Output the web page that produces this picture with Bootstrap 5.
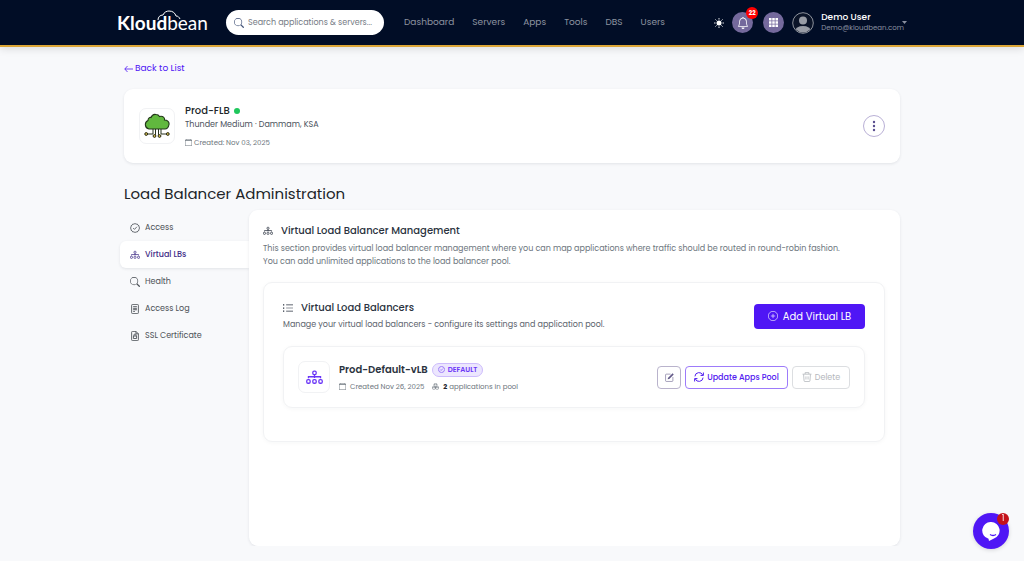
<!DOCTYPE html>
<html lang="en">
<head>
<meta charset="utf-8">
<meta name="viewport" content="width=device-width, initial-scale=1">
<title>Load Balancer Administration</title>
<link href="https://cdn.jsdelivr.net/npm/bootstrap@5.3.0/dist/css/bootstrap.min.css" rel="stylesheet">
<style>
:root { --brand: #4f16f5; --navy: #010d26; --ink: #2b3340; --soft: #6c757d; --line: #f1f2f4; }
body { font-family: Poppins, Inter, "Liberation Sans", sans-serif; font-size: 9px; line-height: 13px; background: #f8f9fb; color: var(--soft); }
a { text-decoration: none; }
svg { flex: none; fill: currentColor; }
.topbar { background: var(--navy); border-bottom: 2px solid #dca637; box-shadow: 0 2px 8px rgba(0,0,0,.12); min-height: 47px; }
.topbar .container { max-width: 814px; }
.shell { max-width: 800px; }
.brand { font-family: Lato, "Noto Sans", sans-serif; font-size: 19px; line-height: 24px; color: #fff; position: relative; width: 109px; flex: none; }
.brand b { font-weight: 700; }
.brand .cloud { position: absolute; left: 40px; top: -1px; fill: none; }
.search { width: 158px; flex: none; height: 25px; border-radius: 13px; background: #fff; color: #44557a; padding: 0 8px; }
.search input { border: 0; outline: 0; background: none; width: 100%; min-width: 0; padding: 0; font-size: 8px; color: #333; }
.search input::placeholder { color: #757b85; opacity: 1; }
.menu { gap: 18px; margin-left: 20px; }
.menu a { color: #8c93a0; }
.round { width: 21px; height: 21px; border-radius: 50%; border: 0; padding: 0; background: #74699c; color: #fff; position: relative; }
.bell { margin-right: 2px; }
.count { position: absolute; top: -5px; right: -5px; min-width: 12px; height: 12px; border-radius: 6px; background: #f00; color: #fff; font-size: 6px; font-weight: 700; line-height: 12px; text-align: center; }
.plain { background: none; border: 0; padding: 0; color: #fff; }
.user { background: none; border: 0; padding: 0; color: #8a90a0; gap: 7px; text-align: left; }
.user small, .meta { font-size: 7px; line-height: 11px; }
.user strong { color: #fff; font-weight: 500; line-height: 10px; }
.caret { margin-left: -9px; }
.back { color: var(--brand); margin: 15px 0 14px; gap: 2px; }
.panel { background: #fff; border-radius: 9px; box-shadow: 0 1px 3px rgba(30,40,60,.1); }
.server { padding: 11px 15px; min-height: 74px; gap: 10px; }
.tile { border: 1px solid var(--line); border-radius: 7px; flex: none; }
.tile-lg { width: 36px; height: 36px; }
.tile-md { width: 32px; height: 32px; color: #6a35f7; }
.name { font-size: 10px; color: #212529; font-weight: 500; }
.dot { width: 6px; height: 6px; border-radius: 50%; background: #1fc75c; }
.spec { font-size: 8px; line-height: 12px; color: #5c636d; }
.server .spec { margin-top: 2px; color: #4b525c; }
.created { margin-top: 6px; gap: 2px; }
.more { width: 22px; height: 22px; border-radius: 50%; border: 1px solid #b9b0d6; background: #fff; color: #594c8f; padding: 0; }
.page-title { font-size: 15px; line-height: 20px; color: #212529; font-weight: 400; margin: 21px 0 6px; }
.side { width: 129px; flex: none; margin-left: -4px; padding-top: 4px; }
.side a { min-height: 27px; padding: 0 10px; gap: 5px; color: #4c5157; border-radius: 6px 0 0 6px; font-size: 8px; }
.side a.active { background: #fff; color: #3f2c86; font-weight: 500; box-shadow: 0 1px 3px rgba(30,40,60,.1); }
.main { min-height: 336px; padding: 14px 15px 20px 14px; }
.main h2, .main h3, .main h4 { margin: 0; font-size: 10px; line-height: 14px; font-weight: 500; color: var(--ink); }
.main h4 { font-weight: 600; }
.intro { font-size: 8px; }
.box { border: 1px solid var(--line); border-radius: 9px; box-shadow: 0 1px 4px rgba(30,40,60,.04); }
.list-box { padding: 18px 19px 33px; margin-top: 14px; }
.lb { padding: 14px; margin-top: 15px; gap: 9px; }
.add { background: var(--brand); color: #fff; border: 0; border-radius: 4px; height: 25px; width: 111px; font-size: 10px; gap: 5px; padding: 0; }
.act { height: 23px; border-radius: 4px; background: #fff; font-size: 8px; gap: 3px; padding: 0; }
.edit { width: 24px; border: 1px solid #b9b3cc; color: #625a88; }
.pool { width: 103px; border: 1px solid #9d7bfa; color: #5320f0; font-weight: 500; }
.del { width: 58px; border: 1px solid #dcdee1; color: #b4b7bc; }
.tag { height: 14px; border-radius: 7px; border: 1px solid #cdbcfc; background: #ece6fe; color: #6a35f7; font-size: 7px; line-height: 12px; font-weight: 600; padding: 0 5px; gap: 3px; }
.chat { position: fixed; right: 15px; bottom: 12px; width: 36px; height: 36px; border-radius: 50%; border: 0; padding: 0; background: var(--brand); color: #fff; box-shadow: 0 1px 4px rgba(0,0,0,.15); }
.chat .count { background: #c4121a; right: 0; top: 0; font-size: 8px; font-weight: 400; }
</style>
</head>
<body>
<svg width="0" height="0" class="position-absolute" aria-hidden="true">
  <symbol id="i-tree" viewBox="0 0 16 16"><g fill="none" stroke="currentColor" stroke-width="1.200"><rect x="6.400" y="2" width="3.200" height="3.200" rx="1.200"/><rect x=".7" y="10" width="3.200" height="3.400" rx="1.200"/><rect x="6.400" y="10" width="3.200" height="3.400" rx="1.200"/><rect x="12.100" y="10" width="3.200" height="3.400" rx="1.200"/><path d="M8 5.200V8.500M2.300 8.800V7.300h11.400v1.500"/></g></symbol>
  <symbol id="i-search" viewBox="0 0 16 16"><path d="M11.742 10.344a6.500 6.500 0 1 0-1.397 1.398l3.850 3.850a1 1 0 0 0 1.415-1.414l-3.850-3.850zM12 6.500a5.500 5.500 0 1 1-11 0 5.500 5.500 0 0 1 11 0"/></symbol>
  <symbol id="i-cal" viewBox="0 0 16 16"><path d="M3.500 0a.5.5 0 0 1 .5.5V1h8V.5a.5.5 0 0 1 1 0V1h1a2 2 0 0 1 2 2v11a2 2 0 0 1-2 2H2a2 2 0 0 1-2-2V3a2 2 0 0 1 2-2h1V.5a.5.5 0 0 1 .5-.5M1 4v10a1 1 0 0 0 1 1h12a1 1 0 0 0 1-1V4z"/></symbol>
  <symbol id="i-check" viewBox="0 0 16 16"><g fill="none" stroke="currentColor" stroke-width="1.300"><path d="M8 .8l1.700 1 2-.1.900 1.700 1.800 1 0 2 1 1.600-1 1.700-.1 2-1.700 1-.9 1.700-2-.1L8 15.200l-1.700-1-2 .1-.9-1.700-1.700-1v-2L.7 8l1-1.600v-2l1.700-1 .9-1.700 2 .1z"/><path d="M5 8l2.200 2.200L11 6"/></g></symbol>
</svg>

<nav class="topbar d-flex align-items-center">
  <div class="container d-flex align-items-center">
    <a href="#" class="brand"><b>Kloud</b>bean
      <svg class="cloud" width="24" height="12" viewBox="0 0 24 12" stroke="#fff"><path d="M1 10c0-3 2-5 5-5 1-3 4-4 6-4 4 0 6 2 7 5 2 0 3 1 4 3"/></svg>
    </a>
    <label class="search d-flex align-items-center gap-1" for="q">
      <svg width="10" height="10"><use href="#i-search"/></svg>
      <input id="q" type="text" placeholder="Search applications &amp; servers..." aria-label="Search">
    </label>
    <div class="menu d-flex">
      <a href="#">Dashboard</a><a href="#">Servers</a><a href="#">Apps</a><a href="#">Tools</a><a href="#">DBS</a><a href="#">Users</a>
    </div>
    <div class="d-flex align-items-center gap-2 ms-auto">
      <button class="plain d-flex" aria-label="Theme"><svg width="10" height="10" viewBox="0 0 16 16"><circle cx="8" cy="8" r="4"/><path stroke="currentColor" stroke-width="1.400" d="M8 0v2.500M8 13.500V16M0 8h2.500M13.500 8H16M2.300 2.300l1.800 1.800M11.900 11.900l1.800 1.800M2.300 13.700l1.800-1.800M11.900 4.100l1.800-1.800"/></svg></button>
      <button class="round bell d-flex align-items-center justify-content-center" aria-label="Notifications"><svg width="12" height="12" viewBox="0 0 16 16"><path d="M8 16a2 2 0 0 0 2-2H6a2 2 0 0 0 2 2M8 1.918l-.797.161A4 4 0 0 0 4 6c0 .628-.134 2.197-.459 3.742-.16.767-.376 1.566-.663 2.258h10.244c-.287-.692-.502-1.490-.663-2.258C12.134 8.197 12 6.628 12 6a4 4 0 0 0-3.203-3.920zM14.220 12c.223.447.481.801.780 1H1c.299-.199.557-.553.780-1C2.680 10.200 3 6.880 3 6c0-2.420 1.720-4.440 4.005-4.901a1 1 0 1 1 1.990 0A5 5 0 0 1 13 6c0 .880.320 4.200 1.220 6"/></svg><span class="count">22</span></button>
      <button class="round d-flex align-items-center justify-content-center" aria-label="Modules"><svg width="9" height="9" viewBox="0 0 9 9"><path d="M0 0h2.500v2.500H0zM3.250 0h2.500v2.500h-2.500zM6.500 0H9v2.500H6.500zM0 3.250h2.500v2.500H0zM3.250 3.250h2.500v2.500h-2.500zM6.500 3.250H9v2.500H6.500zM0 6.500h2.500V9H0zM3.250 6.500h2.500V9h-2.500zM6.500 6.500H9V9H6.500z"/></svg></button>
      <button class="user d-flex align-items-center">
        <svg width="22" height="22" viewBox="0 0 22 22"><defs><clipPath id="av"><circle cx="11" cy="11" r="9.500"/></clipPath></defs><circle cx="11" cy="11" r="10.300" fill="#0b1428" stroke="#8d929c" stroke-width="1"/><g clip-path="url(#av)" fill="#989ca5"><circle cx="11" cy="8.500" r="4"/><ellipse cx="11" cy="19" rx="8" ry="5"/></g></svg>
        <span class="d-flex flex-column"><strong>Demo User</strong><small>Demo@kloudbean.com</small></span>
        <svg class="caret" width="5" height="3" viewBox="0 0 5 3"><path d="M0 0h5L2.500 3z"/></svg>
      </button>
    </div>
  </div>
</nav>

<div class="container shell">
  <a href="#" class="back d-inline-flex align-items-center"><svg width="9" height="8" viewBox="0 0 9 8"><path d="M3.500 1L.8 4l2.700 3M.8 4H9" fill="none" stroke="currentColor" stroke-width=".8"/></svg>Back to List</a>

  <section class="panel server d-flex align-items-center">
    <div class="tile tile-lg d-flex align-items-center justify-content-center">
      <svg width="26" height="26" viewBox="0 0 26 26"><g fill="none" stroke="#29331f" stroke-width="1"><path d="M9 15v6H3M11.500 15v7M14.500 15v7M17 15v6h6"/></g><path d="M5 16a4.500 4.500 0 0 1-1-8.500C4 5 6 4 7 4.500 8 2 10 1 12 1.500c2 0 3 1 3.500 2C19 2.500 21 5 20.500 7c3 0 5 2 4.500 4.500S23 16 21 16z" fill="#61b83e" stroke="#223519" stroke-width="1.100"/><g fill="#d4bf4c" stroke="#2c2c18"><circle cx="2.200" cy="21" r="1.400"/><circle cx="10.500" cy="23" r="1.400"/><circle cx="15.500" cy="23" r="1.400"/><circle cx="23.800" cy="21" r="1.400"/></g></svg>
    </div>
    <div>
      <div class="name d-flex align-items-center gap-1">Prod-FLB <span class="dot"></span></div>
      <div class="spec">Thunder Medium · Dammam, KSA</div>
      <div class="meta created d-flex align-items-center"><svg width="7" height="7"><use href="#i-cal"/></svg>Created: Nov 03, 2025</div>
    </div>
    <button class="more ms-auto d-flex align-items-center justify-content-center" aria-label="More"><svg width="4" height="12" viewBox="0 0 4 12"><circle cx="2" cy="2" r="1.200"/><circle cx="2" cy="6" r="1.200"/><circle cx="2" cy="10" r="1.200"/></svg></button>
  </section>

  <h1 class="page-title">Load Balancer Administration</h1>

  <div class="d-flex align-items-stretch">
    <nav class="side">
      <a href="#" class="d-flex align-items-center"><svg width="10" height="10"><use href="#i-check"/></svg>Access</a>
      <a href="#" class="active d-flex align-items-center"><svg width="10" height="10"><use href="#i-tree"/></svg>Virtual LBs</a>
      <a href="#" class="d-flex align-items-center"><svg width="10" height="10"><use href="#i-search"/></svg>Health</a>
      <a href="#" class="d-flex align-items-center"><svg width="10" height="10" viewBox="0 0 16 16"><rect x="2.600" y=".6" width="10.800" height="14.800" rx="1.500" fill="none" stroke="currentColor" stroke-width="1.400"/><path d="M5 3.500h6v1.400H5zM5 6h6v1.400H5zM5 8.500h6v1.400H5zM5 11h3v1.400H5z"/></svg>Access Log</a>
      <a href="#" class="d-flex align-items-center"><svg width="10" height="10" viewBox="0 0 16 16"><path d="M9.500.6H4A1.400 1.400 0 0 0 2.600 2v12A1.400 1.400 0 0 0 4 15.400h8a1.400 1.400 0 0 0 1.400-1.400V4.500zV4.500h4M6.300 8V6.500a1.700 1.700 0 0 1 3.400 0V8M5.500 8h5v4h-5z" fill="none" stroke="currentColor" stroke-width="1.400"/></svg>SSL Certificate</a>
    </nav>

    <main class="panel main flex-grow-1">
      <h2 class="d-flex align-items-center gap-2"><svg width="10" height="10"><use href="#i-tree"/></svg>Virtual Load Balancer Management</h2>
      <p class="intro mb-0 mt-1">This section provides virtual load balancer management where you can map applications where traffic should be routed in round-robin fashion.<br>You can add unlimited applications to the load balancer pool.</p>

      <section class="box list-box">
        <div class="d-flex align-items-center justify-content-between">
          <div>
            <h3 class="d-flex align-items-center gap-2"><svg width="10" height="10" viewBox="0 0 16 16"><path d="M5 2.500h11v1H5zM5 7.500h11v1H5zM5 12.500h11v1H5zM0 2h2v2H0zM0 7h2v2H0zM0 12h2v2H0z"/></svg>Virtual Load Balancers</h3>
            <div class="spec mt-1">Manage your virtual load balancers - configure its settings and application pool.</div>
          </div>
          <button class="add d-flex align-items-center justify-content-center"><svg width="10" height="10" viewBox="0 0 16 16"><path d="M8 4.500v7M4.500 8h7M15.500 8a7.500 7.500 0 1 1-15 0 7.500 7.500 0 0 1 15 0z" fill="none" stroke="currentColor"/></svg>Add Virtual LB</button>
        </div>

        <article class="box lb d-flex align-items-center">
          <div class="tile tile-md d-flex align-items-center justify-content-center"><svg width="17" height="17"><use href="#i-tree"/></svg></div>
          <div>
            <div class="d-flex align-items-center gap-1"><h4>Prod-Default-vLB</h4><span class="tag d-flex align-items-center"><svg width="7" height="7"><use href="#i-check"/></svg>DEFAULT</span></div>
            <div class="meta d-flex align-items-center mt-1 gap-1"><svg width="7" height="7"><use href="#i-cal"/></svg>Created Nov 26, 2025 <svg class="ms-1" width="7" height="7" viewBox="0 0 16 16"><g fill="none" stroke="currentColor" stroke-width="1.300"><path d="M8 .8l3.500 1.700v4L8 8.200 4.500 6.500v-4zM4.300 7.500l3.500 1.700v4l-3.500 1.700-3.500-1.700v-4zM11.700 7.500l3.500 1.700v4l-3.500 1.700-3.500-1.700v-4zM4.500 2.500L8 4.200l3.500-1.700M.8 9.200l3.500 1.700 3.500-1.700 3.900 1.700 3.500-1.700"/></g></svg><span><strong class="text-dark">2</strong> applications in pool</span></div>
          </div>
          <div class="d-flex align-items-center gap-1 ms-auto">
            <button class="act edit d-flex align-items-center justify-content-center" aria-label="Edit"><svg width="9" height="9" viewBox="0 0 16 16"><path d="M10 2H2.500A1.500 1.500 0 0 0 1 3.500v10A1.500 1.500 0 0 0 2.500 15h10a1.500 1.500 0 0 0 1.500-1.500V7" fill="none" stroke="currentColor"/><path d="M13.500.5l2 2-8 8-2.800.8.800-2.800z"/></svg></button>
            <button class="act pool d-flex align-items-center justify-content-center"><svg width="10" height="10" viewBox="0 0 16 16"><g fill="none" stroke="currentColor" stroke-width="1.600"><path d="M1.500 7A6.500 6.500 0 0 1 14 5M14.500 9A6.500 6.500 0 0 1 2 11M15 .8V5.500h-4.500M1 15.200v-4.700h4.500"/></g></svg>Update Apps Pool</button>
            <button class="act del d-flex align-items-center justify-content-center"><svg width="10" height="10" viewBox="0 0 16 16"><g fill="none" stroke="currentColor" stroke-width="1.300"><path d="M.8 3.500h14.400M5 3.200V1h6v2.200M2.500 3.800l.8 10q.1 1.500 1.500 1.500h6.400q1.400 0 1.500-1.500l.8-10M6.300 7v5M9.700 7v5"/></g></svg>Delete</button>
          </div>
        </article>
      </section>
    </main>
  </div>
</div>

<button class="chat d-flex align-items-center justify-content-center" aria-label="Chat"><svg width="18" height="19" viewBox="0 0 18 19"><path d="M9 0a8.500 8.500 0 0 1 3 16.500L7 19l-.5-2.300A8.500 8.500 0 0 1 9 0z"/><path d="M8 12.500q3 2 6 0" fill="none" stroke="#4f16f5" stroke-width="1.300"/></svg><span class="count">1</span></button>

<script src="https://cdn.jsdelivr.net/npm/bootstrap@5.3.0/dist/js/bootstrap.bundle.min.js"></script>
</body>
</html>
